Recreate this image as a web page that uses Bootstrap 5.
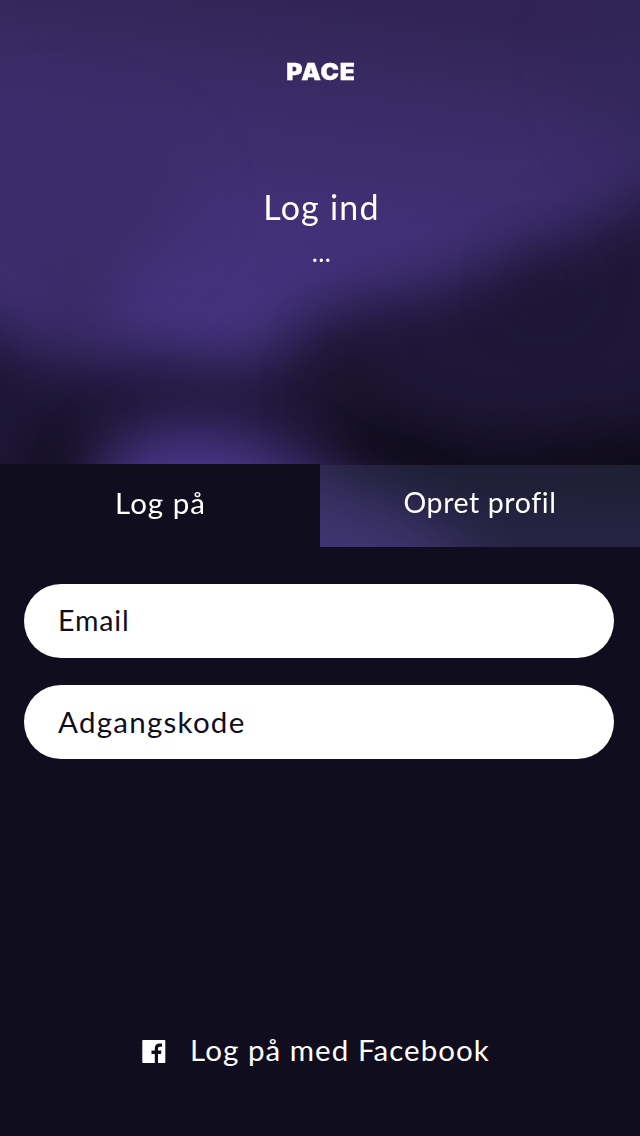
<!DOCTYPE html>
<html lang="da">
<head>
<meta charset="utf-8">
<meta name="viewport" content="width=device-width, initial-scale=1">
<title>PACE – Log ind</title>
<link href="https://cdn.jsdelivr.net/npm/bootstrap@5.3.0/dist/css/bootstrap.min.css" rel="stylesheet">
<style>
  body { background: #100e1e; font-family: Lato, "Open Sans", sans-serif; font-size: 29.5px; line-height: 34px; color: #fff; letter-spacing: 1px; }
  .screen { height: 1136px; overflow: hidden; }
  .hero { height: 547px; overflow: hidden; background: #3c2c6a; }
  .backdrop { position: absolute; top: 0; left: 0; }
  .hero-copy { height: 464px; padding-top: 58px; }
  .brand { font: 900 22.5px/28px Inter, sans-serif; letter-spacing: .8px; -webkit-text-stroke: .3px #fff; transform: scaleX(1.1); padding-left: 2px; }
  .title { font-size: 34px; line-height: 40px; margin-top: 101px; font-weight: 400; letter-spacing: 1.2px; padding-left: 3px; }
  .dots { font-size: 26px; line-height: 28px; margin-top: 11px; letter-spacing: .4px; padding-left: 3px; }
  .tabs { height: 83px; }
  .tab { color: #fff; font-size: inherit; letter-spacing: inherit; line-height: 34px; border: 0; border-radius: 0; padding: 22px 0 27px 1px; }
  .tab-on { background: #100e1e; }
  .tab-off { background: rgba(50,52,84,.48); margin-top: 1px; padding: 20px 0 28px; font-size: 28.5px; letter-spacing: .6px; }
  .fields { padding: 37px 26px 0 24px; gap: 27px; }
  .field { height: 74px; font-size: 28.5px; letter-spacing: .9px; padding: 0 34px 2px; border: 0; color: #100e1e; }
  .field-wide { font-size: 29.5px; letter-spacing: 1.25px; }
  .field::placeholder { color: #100e1e; opacity: 1; }
  .facebook { color: #fff; font-size: 29.5px; letter-spacing: 1.05px; gap: 24px; margin-bottom: 69px; line-height: 34px; padding: 0; margin-right: 8px; border: 0; }
  .facebook svg { margin-top: 2px; }
</style>
</head>
<body>
<main class="screen d-flex flex-column">
  <header class="hero position-relative">
    <svg class="backdrop" width="640" height="547" viewBox="0 0 640 547" aria-hidden="true">
      <defs>
        <linearGradient id="sky" x1=".55" y1="0" x2=".4" y2="1">
          <stop offset="0" stop-color="#312454"/><stop offset=".18" stop-color="#3a2b66"/><stop offset=".4" stop-color="#413076"/><stop offset=".6" stop-color="#45337f"/>
        </linearGradient>
        <filter id="soft" x="-50%" y="-50%" width="200%" height="200%" color-interpolation-filters="sRGB"><feGaussianBlur stdDeviation="30"/></filter>
        <filter id="wide" x="-100%" y="-100%" width="300%" height="300%" color-interpolation-filters="sRGB"><feGaussianBlur stdDeviation="30"/></filter>
      </defs>
      <rect width="640" height="547" fill="url(#sky)"/>
      <g filter="url(#wide)">
        <ellipse cx="75" cy="300" rx="40" ry="60" fill="#35265a" opacity=".7"/>
        <ellipse cx="40" cy="200" rx="150" ry="90" fill="#3b2b66" opacity=".7"/>
        <ellipse cx="640" cy="60" rx="60" ry="90" fill="#32265c" opacity=".6"/>
      </g>
      <path filter="url(#soft)" fill="#1e1737" d="M-100 270L0 322L50 358L120 355L200 362L255 370L300 328L350 304L440 286L510 255L560 240L620 210L740 140V700H-100Z"/>
      <g filter="url(#wide)">
        <ellipse cx="545" cy="285" rx="24" ry="20" fill="#191229" opacity=".7"/>
        <ellipse cx="58" cy="480" rx="22" ry="60" fill="#0c0915"/>
        <path fill="#0a0811" d="M330 390L400 430L500 450L740 420V500H490L350 480Z"/>
        <ellipse cx="345" cy="400" rx="14" ry="60" fill="#15101f"/>
      </g>
      <path filter="url(#soft)" fill="#4b368b" d="M85 560L98 475L140 433L225 429L275 452L325 488L400 510L470 560L480 620H80Z"/>
    </svg>
    <div class="hero-copy position-relative text-center">
      <div class="brand">PACE</div>
      <h1 class="title mb-0">Log ind</h1>
      <p class="dots mb-0">...</p>
    </div>
    <nav class="tabs position-relative d-flex">
      <button class="btn tab tab-on w-50" type="button">Log på</button>
      <button class="btn tab tab-off w-50" type="button">Opret profil</button>
    </nav>
  </header>
  <form class="fields d-flex flex-column">
    <input class="form-control rounded-pill field" type="email" placeholder="Email" aria-label="Email">
    <input class="form-control rounded-pill field field-wide" type="password" placeholder="Adgangskode" aria-label="Adgangskode">
  </form>
  <button class="btn facebook d-flex align-items-center justify-content-center mt-auto" type="button">
    <svg width="24" height="24" viewBox="0 0 24 24" aria-hidden="true"><path fill="#fff" d="M1 1H22.500Q23.300 1 23.300 1.800V23.200Q23.300 24 22.500 24H16V15H19L19.500 11.600H16V9.600C16 8.400 16.500 7.700 17.900 7.700H20V4.600C19.400 4.500 18.500 4.400 17.300 4.400C14.600 4.400 12.800 6 12.800 8.900V11.600H9.500V15H12.800V24H1Q.3 24 .3 23.200V1.800Q.3 1 1 1Z"/></svg>
    <span>Log på med Facebook</span>
  </button>
</main>
<script src="https://cdn.jsdelivr.net/npm/bootstrap@5.3.0/dist/js/bootstrap.bundle.min.js"></script>
</body>
</html>
